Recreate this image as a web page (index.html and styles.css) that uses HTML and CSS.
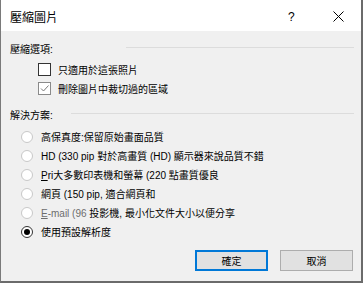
FILE: index.html
```html
<!DOCTYPE html>
<html lang="zh-Hant">
<head>
    <meta charset="UTF-8">
    <title>壓縮圖片</title>
    <link rel="stylesheet" href="styles.css">
</head>
<body>

<div class="dialogo">
    <!-- Barra de título -->
    <div class="titulo">
        <span class="titulo-texto">壓縮圖片</span>
        <span class="ajuda">?</span>
        <span class="fechar">
            <svg width="11" height="11" viewBox="0 0 11 11"><path d="M0.5 0.5 L10.5 10.5 M10.5 0.5 L0.5 10.5" stroke="#000" stroke-width="1" fill="none"/></svg>
        </span>
    </div>

    <div class="conteudo">
        <!-- Opções de compressão -->
        <div class="grupo grupo-primeiro">
            <span>壓縮選項:</span>
            <span class="linha"></span>
        </div>
        <div class="caixa">
            <span class="marca"></span>
            <span>只適用於這張照片</span>
        </div>
        <div class="caixa">
            <span class="marca marcada">
                <svg width="13" height="13" viewBox="0 0 13 13"><path d="M3 6.5 L5.5 9 L10.5 3.5" stroke="#7a7a7a" stroke-width="1" fill="none"/></svg>
            </span>
            <span>刪除圖片中裁切過的區域</span>
        </div>

        <!-- Resolução -->
        <div class="grupo">
            <span>解決方案:</span>
            <span class="linha"></span>
        </div>
        <div class="opcao"><span class="radio"></span><span>高保真度:保留原始畫面品質</span></div>
        <div class="opcao"><span class="radio"></span><span>HD (330 pip 對於高畫質 (HD) 顯示器來說品質不錯</span></div>
        <div class="opcao"><span class="radio"></span><span><u>P</u>ri大多數印表機和螢幕 (220 點畫質優良</span></div>
        <div class="opcao"><span class="radio"></span><span>網頁 (150 pip, 適合網頁和</span></div>
        <div class="opcao"><span class="radio"></span><span><span class="cinza"><u>E</u>-mail (96 </span>投影機, 最小化文件大小以便分享</span></div>
        <div class="opcao"><span class="radio selecionado"></span><span>使用預設解析度</span></div>

        <!-- Botões -->
        <div class="botoes">
            <button class="botao botao-ok">確定</button>
            <button class="botao">取消</button>
        </div>
    </div>
</div>

</body>
</html>
```

FILE: styles.css
```css
/* Estilos gerais */
body {
    margin: 0;
    font-family: "Liberation Sans", "Noto Sans CJK TC", sans-serif;
    font-size: 10px;
    color: #000;
}

.dialogo {
    width: 363px;
    height: 283px;
    box-sizing: border-box;
    background-color: #f0f0f0;
    border-left: 1px solid #7a7a7a;
    border-right: 2px solid #6b6b6b;
    border-bottom: 2px solid #6b6b6b;
}

/* Barra de título */
.titulo {
    height: 31px;
    box-sizing: border-box;
    background-color: #fff;
    display: flex;
    align-items: center;
    padding: 2px 0 0 9px;
}

.titulo-texto {
    font-size: 12px;
    flex: 1;
}

.ajuda {
    font-size: 12px;
    width: 10px;
    margin-right: 35px;
}

.fechar {
    display: flex;
    margin-right: 17px;
}

/* Conteúdo */
.conteudo {
    padding: 0 7px 0 9px;
}

.grupo {
    display: flex;
    align-items: center;
    height: 16px;
    margin-top: 8px;
}

.grupo-primeiro {
    margin-top: 9px;
}

.linha {
    flex: 1;
    border-top: 1px solid #dcdcdc;
    margin-left: 18px;
    margin-top: -1px;
}

.grupo-primeiro .linha {
    margin-left: 73px;
}

.caixa {
    display: flex;
    align-items: center;
    height: 19px;
    padding-left: 28px;
}

.caixa:first-of-type {
    margin-top: 4px;
}

.grupo-primeiro + .caixa {
    margin-top: 4px;
}

.marca {
    width: 13px;
    height: 13px;
    box-sizing: border-box;
    border: 1px solid #333;
    background-color: #fff;
    margin-right: 7px;
    display: flex;
}

.marca svg {
    margin: -1px;
}

.marcada {
    border-color: #8a8a8a;
}

.opcao {
    display: flex;
    align-items: center;
    height: 19px;
    padding-left: 11px;
}

.grupo + .opcao {
    margin-top: 5px;
}

.radio {
    width: 12px;
    height: 12px;
    box-sizing: border-box;
    border: 1px solid #c8c8c8;
    border-radius: 50%;
    background-color: #fff;
    margin-right: 8px;
    display: flex;
    align-items: center;
    justify-content: center;
}

.selecionado {
    border-color: #333;
}

.selecionado::after {
    content: "";
    width: 6px;
    height: 6px;
    border-radius: 50%;
    background-color: #000;
}

.cinza {
    color: #6d6d6d;
}

/* Botões */
.botoes {
    display: flex;
    justify-content: flex-end;
    gap: 12px;
    margin-top: 9px;
    padding-right: 1px;
}

.botao {
    width: 73px;
    height: 21px;
    box-sizing: border-box;
    background-color: #e1e1e1;
    border: 1px solid #adadad;
    font-family: "Liberation Sans", "Noto Sans CJK TC", sans-serif;
    font-size: 10px;
    color: #000;
    padding: 0;
}

.botao-ok {
    border: 2px solid #0078d7;
}
```
